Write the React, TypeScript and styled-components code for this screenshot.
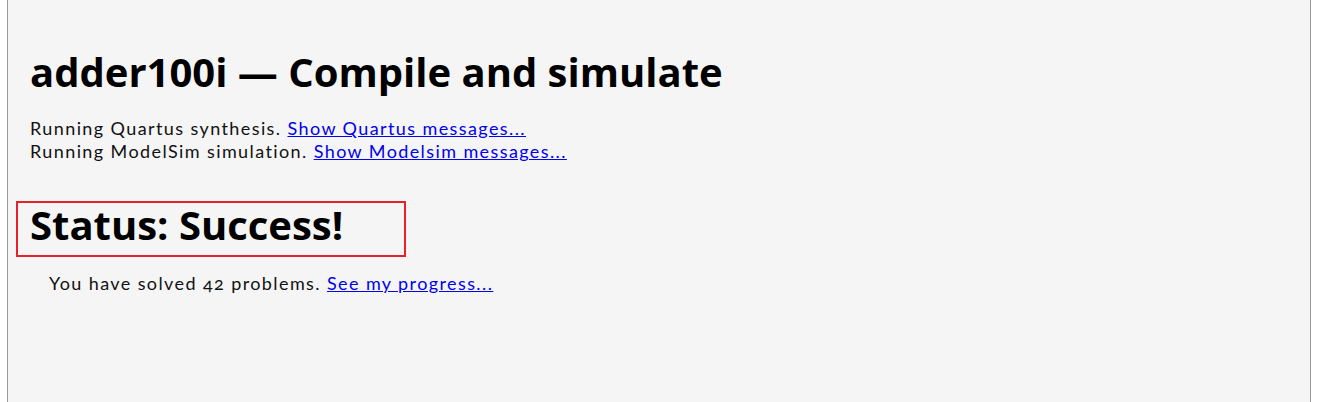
import React from "react";
import styled, { createGlobalStyle } from "styled-components";

const Global = createGlobalStyle`
  html, body { margin: 0; padding: 0; background: #ffffff; }
  body { font-family: "Lato", "Open Sans", sans-serif; }
`;

const Page = styled.div`
  margin: 0 7px;
  min-height: 402px;
  box-sizing: border-box;
  background: #f5f5f5;
  border-left: 1px solid #999999;
  border-right: 1px solid #999999;
  padding: 44px 22px 0 22px;
`;

const Title = styled.h1`
  font-family: "Open Sans", sans-serif;
  font-weight: 700;
  font-size: 40px;
  line-height: 56px;
  margin: 0 0 17px 0;
  color: #000;
`;

const Para = styled.p`
  font-size: 18px;
  line-height: 23px;
  letter-spacing: 1.4px;
  font-variant-numeric: oldstyle-nums;
  margin: 0;
  color: #111;
`;

const Link = styled.a`
  color: #0000ee;
  text-decoration: underline;
`;

const StatusBox = styled.div`
  margin: 38px 0 0 -14px;
  width: 390px;
  height: 56px;
  box-sizing: border-box;
  border: 2px solid #e8202a;
  padding: 0 0 0 12px;
`;

const Status = styled.h2`
  font-family: "Open Sans", sans-serif;
  font-weight: 700;
  font-size: 40px;
  line-height: 44px;
  margin: 0;
  color: #000;
`;

const Progress = styled(Para)`
  margin: 15px 0 0 19px;
`;

export default function App() {
  return (
    <>
      <Global />
      <Page>
        <Title>adder100i — Compile and simulate</Title>
        <Para>
          Running Quartus synthesis. <Link href="#">Show Quartus messages...</Link>
          <br />
          Running ModelSim simulation. <Link href="#">Show Modelsim messages...</Link>
        </Para>
        <StatusBox>
          <Status>Status: Success!</Status>
        </StatusBox>
        <Progress>
          You have solved 42 problems. <Link href="#">See my progress...</Link>
        </Progress>
      </Page>
    </>
  );
}
